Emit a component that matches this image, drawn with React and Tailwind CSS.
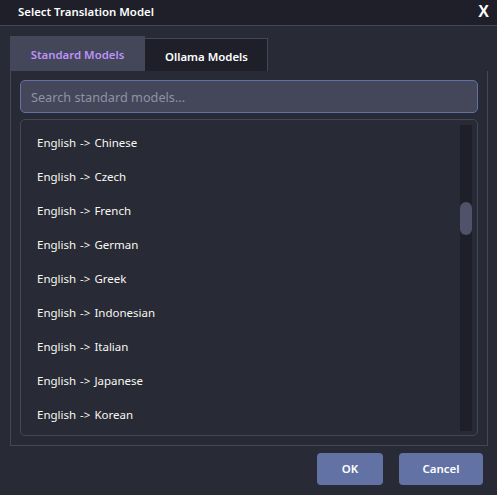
const items = ["Chinese","Czech","French","German","Greek","Indonesian","Italian","Japanese","Korean"];

export default function App() {
  return (
    <div className="w-[497px] h-[495px] overflow-hidden flex flex-col bg-[#282a36] text-[#f8f8f2] font-['Noto_Sans','Open_Sans',sans-serif]">
      <div className="h-[26px] shrink-0 flex items-center justify-between pl-[18px] pr-[8px] pb-[2px] bg-[#1e1f29] border-b border-[#44475a]">
        <span className="text-[11.4px] font-semibold leading-none text-white">Select Translation Model</span>
        <span className="text-[16px] font-bold leading-none text-white font-['Liberation_Sans',sans-serif]">X</span>
      </div>
      <div className="flex-1 flex flex-col pl-[10px] pr-[9px] pt-[10px]">
        <div className="flex items-end h-[35px] shrink-0">
          <div className="w-[135px] h-[35px] pt-[3px] bg-[#44475a] flex items-center justify-center text-[11.4px] font-semibold text-[#bd93f9]">Standard Models</div>
          <div className="w-[123px] h-[33px] pt-[3px] pl-[1px] bg-[#1e1f29] border-t border-r border-[#44475a] flex items-center justify-center text-[11.4px] font-semibold text-white">Ollama Models</div>
        </div>
        <div className="h-[375px] shrink-0 border border-[#44475a] border-t-0 flex flex-col px-[9px] pt-[9px] pb-[9px] gap-[6px]">
          <input
            readOnly
            placeholder="Search standard models..."
            className="h-[33px] w-full shrink-0 rounded-[5px] bg-[#44475a] border border-[#6272a4] px-[10px] text-[12.7px] outline-none placeholder:text-[#8f92a3]"
          />
          <div className="flex-1 rounded-[5px] border border-[#44475a] flex pl-[16px] pr-[5px] pt-[5px] pb-[4px] min-h-0">
            <div className="flex-1 flex flex-col overflow-hidden pt-[1px]">
              {items.map((t) => (
                <div key={t} className="h-[34px] shrink-0 flex items-center text-[11.5px] [word-spacing:1px] text-[#f8f8f2]">{"English -> " + t}</div>
              ))}
            </div>
            <div className="w-[12px] bg-[#1e1f29] shrink-0 pt-[77px]">
              <div className="h-[33px] rounded-[6px] bg-[#4f5268]" />
            </div>
          </div>
        </div>
        <div className="flex justify-end gap-[16px] pt-[7px] pr-[5px]">
          <button className="w-[66px] h-[32px] rounded-[4px] bg-[#6272a4] text-[11.5px] font-semibold text-white">OK</button>
          <button className="w-[84px] h-[32px] rounded-[4px] bg-[#6272a4] text-[11.5px] font-semibold text-white">Cancel</button>
        </div>
      </div>
    </div>
  );
}
